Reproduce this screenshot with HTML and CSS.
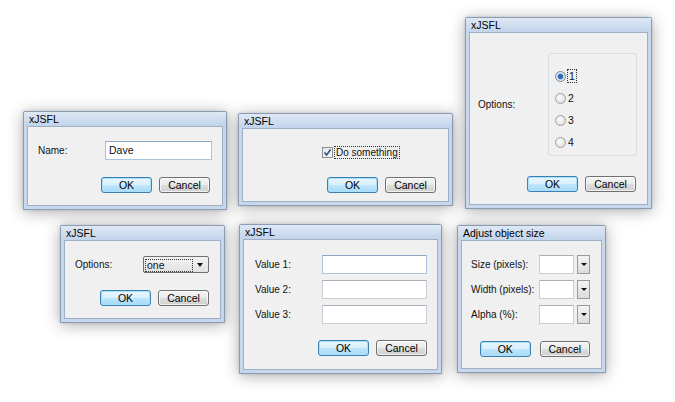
FILE: index.html
```html
<!DOCTYPE html>
<html>
<head>
<meta charset="utf-8">
<link rel="stylesheet" href="styles.css">
</head>
<body>
<div class="desk">

  <section class="win w1">
    <header class="title">xJSFL</header>
    <div class="body b1">
      <div class="row"><span class="lbl">Name:</span><div class="input in-name">Dave</div></div>
      <div class="btns"><button class="btn ok">OK</button><button class="btn">Cancel</button></div>
    </div>
  </section>

  <section class="win w2">
    <header class="title">xJSFL</header>
    <div class="body b2">
      <div class="check-row">
        <span class="checkbox"><svg width="9" height="9" viewBox="0 0 9 9"><path d="M1.5 4.5 L3.6 7 L7.6 1.5" fill="none" stroke="#2b4f8f" stroke-width="1.6"/></svg></span>
        <span class="focus">Do something</span>
      </div>
      <div class="btns"><button class="btn ok">OK</button><button class="btn">Cancel</button></div>
    </div>
  </section>

  <section class="win w3">
    <header class="title">xJSFL</header>
    <div class="body b3">
      <div class="opt-row">
        <span class="lbl">Options:</span>
        <div class="group">
          <div class="radio-row"><span class="radio on"></span><span class="focus">1</span></div>
          <div class="radio-row"><span class="radio"></span><span>2</span></div>
          <div class="radio-row"><span class="radio"></span><span>3</span></div>
          <div class="radio-row"><span class="radio"></span><span>4</span></div>
        </div>
      </div>
      <div class="btns"><button class="btn ok">OK</button><button class="btn">Cancel</button></div>
    </div>
  </section>

  <section class="win w4">
    <header class="title">xJSFL</header>
    <div class="body b4">
      <div class="row"><span class="lbl">Options:</span>
        <div class="select"><span class="sel-val"><span class="focus">one</span></span><span class="arrow"></span></div>
      </div>
      <div class="btns"><button class="btn ok">OK</button><button class="btn">Cancel</button></div>
    </div>
  </section>

  <section class="win w5">
    <header class="title">xJSFL</header>
    <div class="body b5">
      <div class="rows">
        <div class="row"><span class="lbl">Value 1:</span><div class="input in-val focused"></div></div>
        <div class="row"><span class="lbl">Value 2:</span><div class="input in-val"></div></div>
        <div class="row"><span class="lbl">Value 3:</span><div class="input in-val"></div></div>
      </div>
      <div class="btns"><button class="btn ok">OK</button><button class="btn">Cancel</button></div>
    </div>
  </section>

  <section class="win w6">
    <header class="title">Adjust object size</header>
    <div class="body b6">
      <div class="rows">
        <div class="row"><span class="lbl">Size (pixels):</span><div class="input in-num"></div><span class="dd"><span class="arrow"></span></span></div>
        <div class="row"><span class="lbl">Width (pixels):</span><div class="input in-num"></div><span class="dd"><span class="arrow"></span></span></div>
        <div class="row"><span class="lbl">Alpha (%):</span><div class="input in-num"></div><span class="dd"><span class="arrow"></span></span></div>
      </div>
      <div class="btns"><button class="btn ok">OK</button><button class="btn">Cancel</button></div>
    </div>
  </section>

</div>
</body>
</html>
```

FILE: styles.css
```css
* { box-sizing: border-box; }
html, body { margin: 0; padding: 0; background: #fff; }
body {
  font-family: "Liberation Sans", Arial, sans-serif;
  font-size: 10px;
  color: #111;
}
.desk { position: relative; width: 675px; height: 402px; overflow: hidden; background: #fff; }

/* window frame: free-placed windows on a desktop */
.win {
  position: absolute;
  display: flex;
  flex-direction: column;
  background: #c8d8ec;
  border: 1px solid #8c9cb2;
  border-radius: 2px 2px 0 0;
  padding: 0 3px 3px;
  box-shadow: 0 2px 16px rgba(0, 0, 0, 0.32), 0 0 3px rgba(0, 0, 0, 0.15);
}
.w1 { left: 23px; top: 111px; width: 204px; height: 99px; }
.w2 { left: 238px; top: 113px; width: 215px; height: 93px; }
.w3 { left: 465px; top: 17px; width: 187px; height: 192px; }
.w4 { left: 60px; top: 225px; width: 165px; height: 98px; }
.w5 { left: 239px; top: 224px; width: 203px; height: 150px; }
.w6 { left: 457px; top: 225px; width: 149px; height: 148px; }

.title {
  height: 14px;
  line-height: 14px;
  margin: 0 -3px;
  padding-left: 5px;
  font-size: 10.5px;
  color: #000;
  background: linear-gradient(#dee8f5, #c2d4eb);
}
.body {
  flex: 1;
  display: flex;
  flex-direction: column;
  background: #f0f0f0;
  border: 1px solid #9fb0c6;
}

.row { display: flex; align-items: center; }
.lbl { flex: none; width: 67px; }
.rows { display: flex; flex-direction: column; gap: 6px; }

.input {
  background: #fff;
  border: 1px solid #c9ced6;
  border-top-color: #abb0b8;
  height: 19px;
  line-height: 17px;
  padding-left: 3px;
  font-size: 10.5px;
}
.input.focused, .in-name { border-color: #a9c3dc; border-top-color: #8aa7c6; }

.btns { display: flex; justify-content: flex-end; gap: 7px; }
.btn {
  width: 51px;
  height: 16px;
  padding: 0;
  font: inherit;
  font-size: 10.5px;
  color: #000;
  border: 1px solid #707070;
  border-radius: 3px;
  background: linear-gradient(#f3f3f3 0%, #ebebeb 48%, #dddddd 52%, #cfcfcf 100%);
  box-shadow: inset 0 0 0 1px rgba(255, 255, 255, 0.7);
}
.btn.ok {
  border-color: #3c7fb1;
  background: linear-gradient(#eaf6fd 0%, #d9f0fc 48%, #bee6fd 52%, #a7d9f5 100%);
  box-shadow: inset 0 0 0 1px #a9e0fb;
}

.focus { outline: 1px dotted #333; outline-offset: 0; padding: 0 1px; }

/* dialog 1 */
.b1 { padding: 14px 10px 0 10px; }
.in-name { width: 108px; }
.b1 .btns { margin-top: 17px; padding-right: 2px; }

/* dialog 2 */
.b2 { padding: 17px 12px 0 79px; }
.check-row { display: flex; align-items: center; gap: 2px; height: 13px; }
.checkbox {
  width: 11px; height: 11px;
  border: 1px solid #8e8f8f;
  background: linear-gradient(135deg, #e4e4e4, #fafafa);
  display: flex; align-items: center; justify-content: center;
}
.b2 .btns { margin-top: 18px; }

/* dialog 3 */
.b3 { padding: 20px 10px 0 8px; }
.opt-row { display: flex; align-items: center; }
.b3 .lbl { width: 70px; }
.group {
  width: 89px; height: 103px;
  border: 1px solid #d5dfe5;
  border-radius: 3px;
  padding: 16px 0 0 6px;
  display: flex; flex-direction: column; gap: 10px;
}
.radio-row { display: flex; align-items: center; gap: 2px; height: 12px; font-size: 10.5px; }
.radio {
  width: 11px; height: 11px; border-radius: 50%;
  border: 1px solid #a0a0a0;
  background: radial-gradient(circle at 40% 40%, #fdfdfd, #d6d6d6);
}
.radio.on { background: radial-gradient(circle, #2f6fb8 0 2.2px, #83b3e3 2.8px, #e8e8e8 3.4px, #d0d0d0 100%); border-color: #6a8fb5; }
.b3 .btns { margin-top: 20px; gap: 7px; padding-right: 1px; }

/* dialog 4 */
.b4 { padding: 15px 11px 0 10px; }
.b4 .lbl { width: 68px; }
.select {
  width: 68px; height: 17px;
  display: flex; align-items: center;
  border: 1px solid #707070;
  border-radius: 2px;
  background: linear-gradient(#f3f3f3, #e2e2e2);
  padding: 0 5px 0 2px;
}
.sel-val { flex: 1; font-size: 10.5px; }
.sel-val .focus { display: inline-block; width: 46px; line-height: 11px; padding-left: 1px; }
.arrow {
  width: 0; height: 0;
  border-left: 3.5px solid transparent;
  border-right: 3.5px solid transparent;
  border-top: 4px solid #111;
}
.b4 .btns { margin-top: 17px; }

/* dialog 5 */
.b5 { padding: 15px 10px 0 11px; }
.in-val { width: 105px; }
.b5 .btns { margin-top: 16px; }

/* dialog 6 */
.b6 { padding: 14px 11px 0 9px; }
.b6 .lbl { width: 68px; }
.in-num { width: 35px; height: 19px; }
.dd {
  width: 13px; height: 19px; margin-left: 3px;
  border: 1px solid #9a9a9a;
  background: linear-gradient(#f4f4f4, #dcdcdc);
  display: flex; align-items: center; justify-content: center;
}
.dd .arrow { border-left-width: 3px; border-right-width: 3px; border-top-width: 3px; }
.b6 .btns { margin-top: 17px; justify-content: flex-start; padding-left: 9px; gap: 9px; }
```
